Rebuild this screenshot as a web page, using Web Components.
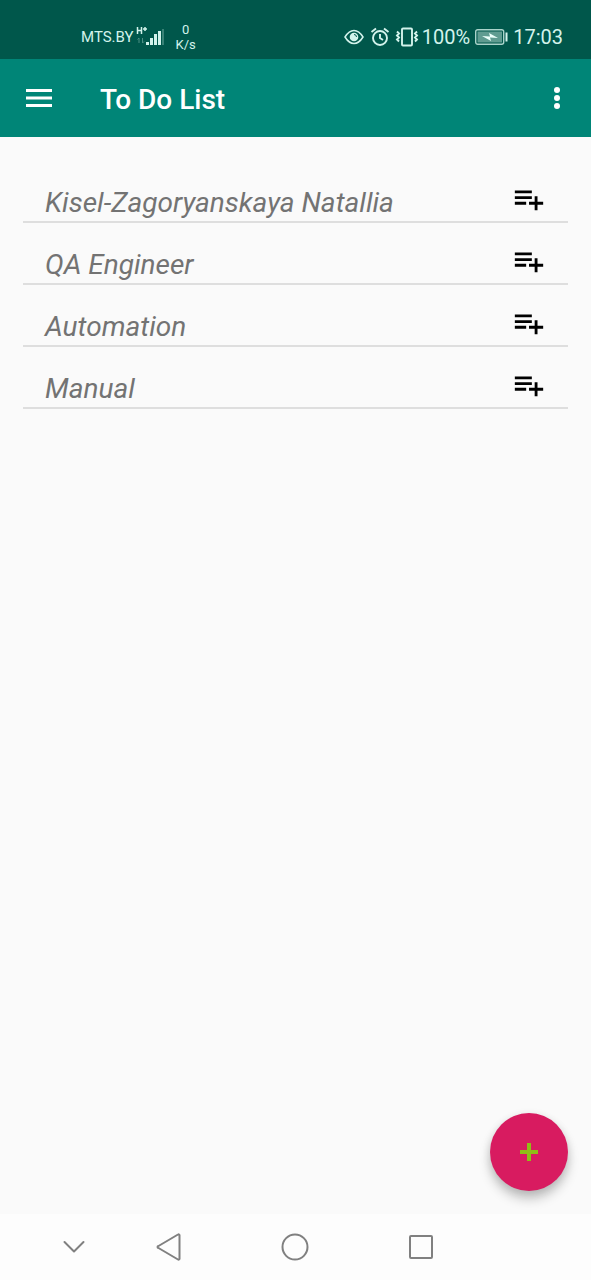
<!DOCTYPE html>
<html lang="en">
<head>
<meta charset="utf-8">
<meta name="viewport" content="width=device-width, initial-scale=1">
<title>To Do List</title>
<style>
  body { margin: 0; background: #fafafa; font-family: Roboto, sans-serif; }
</style>
</head>
<body>
<todo-app></todo-app>
<script>
const reset = `
  * { box-sizing: border-box; }
  svg { display: block; flex: none; }
  button { display: grid; place-items: center; border: 0; padding: 0; margin: 0; background: none; color: inherit; font: inherit; cursor: pointer; }
`;

function define(name, html) {
  const template = document.createElement('template');
  template.innerHTML = html;
  customElements.define(name, class extends HTMLElement {
    constructor() {
      super();
      this.attachShadow({ mode: 'open' }).append(template.content.cloneNode(true));
    }
  });
}

define('status-bar', `
  <style>${reset}
    :host { display: flex; justify-content: space-between; height: 59px; padding: 16px 28px 0 81px; box-sizing: border-box; background: #00574b; color: #d3f3ec; }
    .group { display: flex; align-items: center; height: 42px; }
    .carrier { font-size: 15px; line-height: 20px; }
    .signal { margin-left: 2px; }
    .speed { margin-left: 11px; font-size: 13px; line-height: 15px; text-align: center; }
    .level, .clock { font-size: 20px; line-height: 24px; }
    .battery { margin: 0 5px; }
    .alarm { margin: 0 5px 0 6px; }
    .vibrate { margin-right: 3px; }
  </style>
  <div class="group">
    <span class="carrier">MTS.BY</span>
    <svg class="signal" width="29" height="24" viewBox="0 0 29 24" aria-hidden="true">
      <path d="M1.500 2v7M5.500 2v7M1.500 5.500h4M7 4h4M9 2v4" stroke="currentColor" stroke-width="1.500" fill="none"/>
      <path d="M3 13v5M1.500 14.500l1.500-1.500M6.500 13v5M8 16.500l-1.500 1.500" stroke="#4c8f84" stroke-width="1" fill="none"/>
      <path d="M10 17h3v3h-3zM14 13h3v7h-3zM18 9h3v11h-3zM22 6h3v14h-3z" fill="currentColor"/>
      <path d="M26 4h2v16h-2z" fill="#388276"/>
    </svg>
    <span class="speed">0<br>K/s</span>
  </div>
  <div class="group">
    <svg width="20" height="20" viewBox="0 0 20 20" fill="none" stroke="currentColor" stroke-width="1.500" aria-hidden="true">
      <path d="M1 10Q5 3.500 10 3.500T19 10Q15 16.500 10 16.500T1 10z"/>
      <circle cx="10" cy="10" r="4.300" fill="currentColor" stroke="none"/>
      <path d="M10 7.500a2.500 2.500 0 0 1 2.500 2.500" stroke="#00574b" stroke-width="1"/>
    </svg>
    <svg class="alarm" width="20" height="20" viewBox="0 0 20 20" fill="none" stroke="currentColor" stroke-width="1.900" aria-hidden="true">
      <circle cx="10" cy="11" r="7"/>
      <path d="M10 7v4l3 2M1.500 5L6 1.500M18.500 5L14 1.500"/>
    </svg>
    <svg class="vibrate" width="24" height="20" viewBox="0 0 24 20" fill="none" stroke="currentColor" stroke-width="1.900" aria-hidden="true">
      <rect x="7" y="1.500" width="10" height="17" rx="1"/>
      <path d="M2 4.500l2 2-2 2 2 2-2 2 2 2M22 4.500l-2 2 2 2-2 2 2 2-2 2"/>
    </svg>
    <span class="level">100%</span>
    <svg class="battery" width="33" height="16" viewBox="0 0 33 16" aria-hidden="true">
      <rect x="0.700" y="0.700" width="28" height="14.600" rx="2" fill="none" stroke="#a9d3ca" stroke-width="1.400"/>
      <rect x="2.500" y="2.500" width="24.500" height="11" fill="#5f9c91"/>
      <path d="M7 7l8 0.500-1-3.500 9 5-8-0.500 1 3.500z" fill="#eafffa"/>
      <path d="M30.500 3.500h2v9h-2z" fill="currentColor"/>
    </svg>
    <span class="clock">17:03</span>
  </div>
`);

define('app-bar', `
  <style>${reset}
    :host { display: flex; align-items: center; height: 78px; padding: 0 12px; background: #008577; color: #fff; }
    button { width: 44px; height: 56px; }
    .menu { width: 54px; }
    h1 { flex: 1; margin: 0 0 0 34px; padding-top: 4px; font-size: 28px; line-height: 34px; font-weight: 500; }
  </style>
  <button class="menu" type="button" aria-label="Open navigation">
    <svg width="26" height="18" viewBox="0 0 26 18"><path d="M0 0h26v3H0zM0 7.500h26v3H0zM0 15h26v3H0z" fill="currentColor"/></svg>
  </button>
  <h1><slot></slot></h1>
  <button type="button" aria-label="More options">
    <svg width="6" height="24" viewBox="0 0 6 24" fill="currentColor"><circle cx="3" cy="4" r="3"/><circle cx="3" cy="12" r="3"/><circle cx="3" cy="20" r="3"/></svg>
  </button>
`);

define('todo-item', `
  <style>${reset}
    :host { display: flex; align-items: flex-end; justify-content: space-between; box-sizing: border-box; height: 62px; padding: 0 22px 1px; border-bottom: 2px solid #dedede; color: #737373; }
    .label { font-size: 28px; line-height: 34px; font-style: italic; }
    button { width: 34px; height: 34px; margin-bottom: 4px; color: #000; }
  </style>
  <span class="label"><slot></slot></span>
  <button type="button" aria-label="Add to list">
    <svg width="34" height="34" viewBox="0 0 24 24"><path fill="currentColor" d="M14 10H2v2h12v-2zm0-4H2v2h12V6zm4 8v-4h-2v4h-4v2h4v4h2v-4h4v-2h-4zM2 16h8v-2H2v2z"/></svg>
  </button>
`);

define('add-button', `
  <style>${reset}
    :host { display: block; }
    button { width: 78px; height: 78px; border-radius: 50%; background: #d81b60; color: #8fbe16; box-shadow: 0 8px 12px rgba(0,0,0,.22), 0 2px 8px rgba(0,0,0,.1); }
  </style>
  <button type="button" aria-label="Add item">
    <svg width="18" height="18" viewBox="0 0 18 18"><path d="M7 0h4v7h7v4h-7v7H7v-7H0V7h7z" fill="currentColor"/></svg>
  </button>
`);

define('navigation-bar', `
  <style>${reset}
    :host { display: grid; grid-template-columns: 64px 126px 126px 126px 64px; justify-content: center; box-sizing: border-box; height: 66px; padding-right: 2px; background: #fdfdfd; color: #808080; }
    svg { fill: none; stroke: currentColor; stroke-width: 2; stroke-linejoin: round; stroke-linecap: round; }
  </style>
  <button type="button" aria-label="Hide navigation bar"><svg width="28" height="28" viewBox="0 0 28 28"><path d="M4.500 9l9.500 9.500L23.500 9"/></svg></button>
  <button type="button" aria-label="Back"><svg width="28" height="28" viewBox="0 0 28 28"><path d="M24.500 2v24a1 1 0 0 1-1.500 0.500L3.500 15a1 1 0 0 1 0-2L23 1.500a1 1 0 0 1 1.500 0.500z"/></svg></button>
  <button type="button" aria-label="Home"><svg width="28" height="28" viewBox="0 0 28 28"><circle cx="14" cy="14" r="12.500"/></svg></button>
  <button type="button" aria-label="Recent apps"><svg width="28" height="28" viewBox="0 0 28 28"><rect x="3" y="3" width="22" height="22" rx="1"/></svg></button>
`);

define('todo-app', `
  <style>${reset}
    :host { display: flex; flex-direction: column; min-height: 100vh; }
    main { flex: 1; display: flex; flex-direction: column; justify-content: space-between; padding: 24px 23px 23px; }
    ul { list-style: none; margin: 0; padding: 0; }
    add-button { align-self: flex-end; }
  </style>
  <status-bar></status-bar>
  <app-bar>To Do List</app-bar>
  <main>
    <ul>
      <li><todo-item>Kisel-Zagoryanskaya Natallia</todo-item></li>
      <li><todo-item>QA Engineer</todo-item></li>
      <li><todo-item>Automation</todo-item></li>
      <li><todo-item>Manual</todo-item></li>
    </ul>
    <add-button></add-button>
  </main>
  <navigation-bar></navigation-bar>
`);
</script>
</body>
</html>
